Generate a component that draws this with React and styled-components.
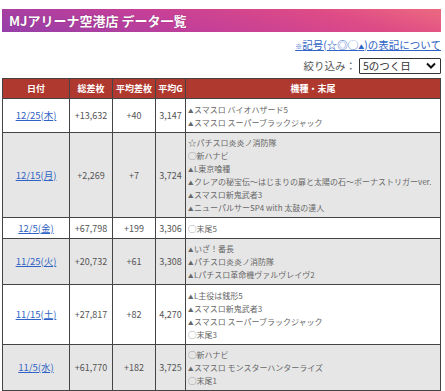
import React from "react";
import styled, { createGlobalStyle } from "styled-components";

const GlobalStyle = createGlobalStyle`
  body {
    margin: 0;
    background: #fff;
    font-family: "Noto Sans CJK JP", "Noto Sans", sans-serif;
    color: #555;
  }
`;

const Page = styled.div`
  width: 439px;
  padding: 9px 2px 0 2px;
`;

const TitleBar = styled.h1`
  margin: 0;
  height: 23px;
  display: flex;
  align-items: center;
  padding: 0 7px;
  background: linear-gradient(15deg, #953fa9 0%, #c43f98 40%, #de4b86 75%, #ec6a80 100%);
  color: #fff;
  font-size: 13px;
  font-weight: 700;
  text-shadow: 0 0 1px rgba(80, 0, 60, 0.6);
`;

const LinkRow = styled.div`
  display: flex;
  justify-content: flex-end;
  margin-top: 6px;
  height: 14px;
  line-height: 14px;
`;

const InfoLink = styled.a`
  color: #2f63c5;
  font-size: 10.5px;
  text-decoration: underline;
`;

const Small = styled.span`
  font-size: ${(p) => p.size || 6}px;
`;

const FilterRow = styled.div`
  display: flex;
  justify-content: flex-end;
  align-items: center;
  gap: 3px;
  margin-top: 6px;
  height: 16px;
`;

const FilterLabel = styled.span`
  font-size: 10.5px;
  line-height: 16px;
  color: #555;
`;

const SelectWrap = styled.div`
  position: relative;
  width: 82px;
  height: 16px;
`;

const Select = styled.select`
  appearance: none;
  display: block;
  box-sizing: border-box;
  width: 100%;
  height: 16px;
  margin: 0;
  padding: 0 0 0 3px;
  border: 1px solid #333;
  border-radius: 1px;
  background: #fff;
  color: #333;
  font-family: "Noto Sans CJK JP", sans-serif;
  font-size: 10.5px;
  line-height: 14px;
`;

const Chevron = styled.svg`
  position: absolute;
  right: 5px;
  top: 4px;
  width: 10px;
  height: 8px;
  pointer-events: none;
`;

const Table = styled.table`
  width: 439px;
  margin-top: 4px;
  border-collapse: collapse;
  table-layout: fixed;
  border: 1px solid #444;
`;

const Th = styled.th`
  background: #b0392f;
  color: #fff;
  font-size: 9px;
  font-weight: 700;
  height: 19px;
  line-height: 12px;
  padding: 0;
  border: 1px solid #444;
  text-align: center;
`;

const Row = styled.tr`
  background: ${(p) => (p.shade ? "#e6e6e6" : "#fff")};
`;

const Td = styled.td`
  border: 1px solid #444;
  padding: 3.5px 2px 3px;
  font-size: 9px;
  line-height: 13px;
  color: #555;
  text-align: center;
  vertical-align: middle;
  white-space: nowrap;
`;

const DateLink = styled.a`
  color: #2f63c5;
  text-decoration: underline;
  font-size: 9.5px;
`;

const MachineCell = styled(Td)`
  text-align: left;
`;

const Machine = styled.div`
  height: 13px;
  font-size: 8px;
  line-height: 13px;
  color: #666;
  overflow: hidden;
`;

const Mark = styled.span`
  font-size: ${(p) => (p.kind === "tri" ? 5.5 : 8.5)}px;
  line-height: 1;
  margin-right: ${(p) => (p.kind === "tri" ? 0.5 : 0)}px;
`;

const rows = [
  {
    date: "12/25(木)",
    total: "+13,632",
    avg: "+40",
    g: "3,147",
    items: ["▲スマスロ バイオハザード5", "▲スマスロ スーパーブラックジャック"],
  },
  {
    date: "12/15(月)",
    total: "+2,269",
    avg: "+7",
    g: "3,724",
    items: [
      "☆パチスロ炎炎ノ消防隊",
      "◯新ハナビ",
      "▲L東京喰種",
      "▲クレアの秘宝伝〜はじまりの扉と太陽の石〜ボーナストリガーver.",
      "▲スマスロ新鬼武者3",
      "▲ニューパルサーSP4 with 太鼓の達人",
    ],
  },
  {
    date: "12/5(金)",
    total: "+67,798",
    avg: "+199",
    g: "3,306",
    items: ["◯末尾5"],
  },
  {
    date: "11/25(火)",
    total: "+20,732",
    avg: "+61",
    g: "3,308",
    items: ["▲いざ！番長", "▲パチスロ炎炎ノ消防隊", "▲Lパチスロ革命機ヴァルヴレイヴ2"],
  },
  {
    date: "11/15(土)",
    total: "+27,817",
    avg: "+82",
    g: "4,270",
    items: ["▲L主役は銭形5", "▲スマスロ新鬼武者3", "▲スマスロ スーパーブラックジャック", "◯末尾3"],
  },
  {
    date: "11/5(水)",
    total: "+61,770",
    avg: "+182",
    g: "3,725",
    items: ["◯新ハナビ", "▲スマスロ モンスターハンターライズ", "◯末尾1"],
  },
];

const renderItem = (text) => {
  const first = text[0];
  const rest = text.slice(1);
  const kind = first === "▲" ? "tri" : "sym";
  return (
    <>
      <Mark kind={kind}>{first}</Mark>
      {rest}
    </>
  );
};

const App = () => {
  return (
    <Page>
      <GlobalStyle />
      <TitleBar>MJアリーナ空港店 データ一覧</TitleBar>
      <LinkRow>
        <InfoLink href="#">
          <Small size={7}>※</Small>記号(☆◎◯<Small size={6}>▲</Small>)の表記について
        </InfoLink>
      </LinkRow>
      <FilterRow>
        <FilterLabel>絞り込み：</FilterLabel>
        <SelectWrap>
          <Select defaultValue="5">
            <option value="5">5のつく日</option>
          </Select>
          <Chevron viewBox="0 0 10 8">
            <path d="M1 1.5 L5 5.5 L9 1.5" fill="none" stroke="#111" strokeWidth="2" />
          </Chevron>
        </SelectWrap>
      </FilterRow>
      <Table>
        <colgroup>
          <col style={{ width: 67 }} />
          <col style={{ width: 43 }} />
          <col style={{ width: 43 }} />
          <col style={{ width: 30 }} />
          <col />
        </colgroup>
        <thead>
          <tr>
            <Th>日付</Th>
            <Th>総差枚</Th>
            <Th>平均差枚</Th>
            <Th>平均G</Th>
            <Th>機種・末尾</Th>
          </tr>
        </thead>
        <tbody>
          {rows.map((r, i) => (
            <Row key={r.date} shade={i % 2 === 1}>
              <Td>
                <DateLink href="#">{r.date}</DateLink>
              </Td>
              <Td>{r.total}</Td>
              <Td>{r.avg}</Td>
              <Td>{r.g}</Td>
              <MachineCell>
                {r.items.map((t) => (
                  <Machine key={t}>{renderItem(t)}</Machine>
                ))}
              </MachineCell>
            </Row>
          ))}
        </tbody>
      </Table>
    </Page>
  );
};

export default App;
